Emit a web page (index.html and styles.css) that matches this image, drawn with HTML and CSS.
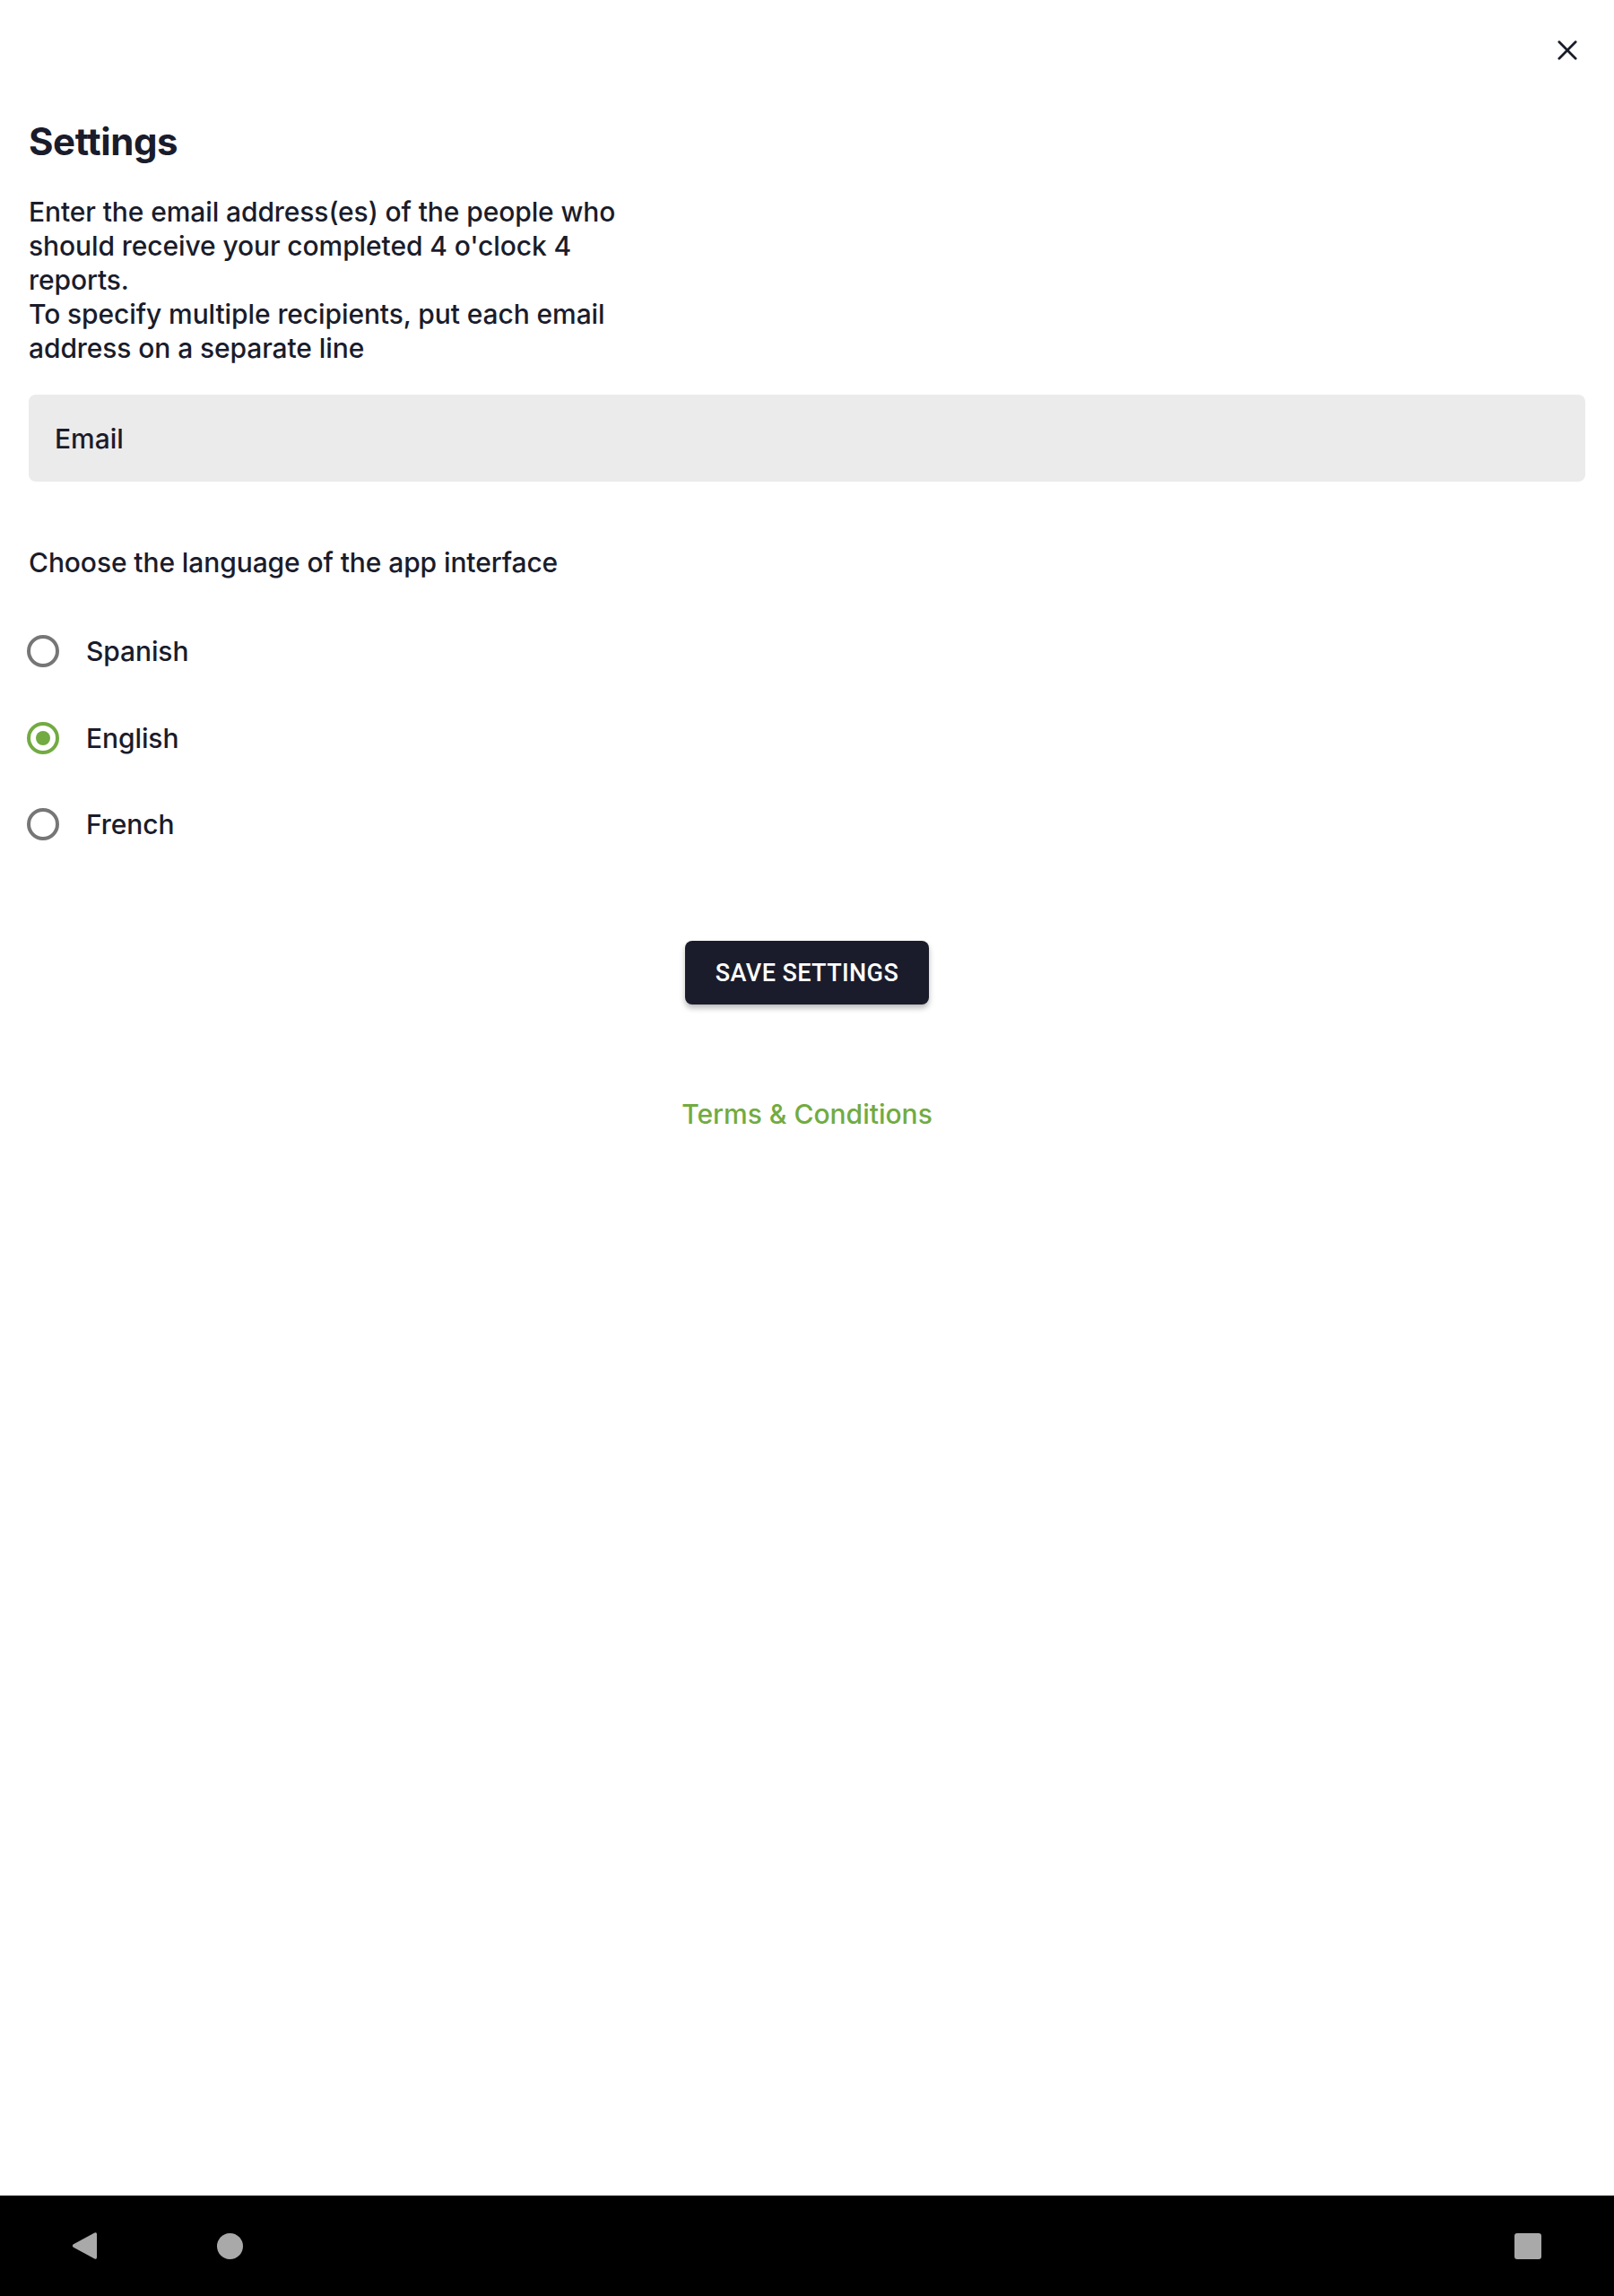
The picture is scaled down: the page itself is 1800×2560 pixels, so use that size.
FILE: index.html
```html
<!DOCTYPE html>
<html lang="en">
<head>
<meta charset="utf-8">
<title>Settings</title>
<link rel="stylesheet" href="styles.css">
</head>
<body>
<div class="screen">
  <main class="content">
    <header class="topbar">
      <button class="close" aria-label="Close">
        <svg viewBox="0 0 24 24" width="24" height="24"><path d="M2 2 L22 22 M22 2 L2 22" stroke="#1a1c2b" stroke-width="3" stroke-linecap="round" fill="none"/></svg>
      </button>
    </header>
    <h1 class="title">Settings</h1>
    <p class="intro">Enter the email address(es) of the people who should receive your completed 4 o'clock 4 reports.<br>To specify multiple recipients, put each email address on a separate line</p>
    <div class="field"><span class="field-label">Email</span></div>
    <p class="question">Choose the language of the app interface</p>
    <div class="radios">
      <div class="radio-row"><span class="radio"></span><span class="radio-label">Spanish</span></div>
      <div class="radio-row"><span class="radio checked"></span><span class="radio-label">English</span></div>
      <div class="radio-row"><span class="radio"></span><span class="radio-label">French</span></div>
    </div>
    <div class="actions">
      <button class="save">SAVE SETTINGS</button>
    </div>
    <div class="links"><a class="terms">Terms &amp; Conditions</a></div>
  </main>
  <nav class="navbar">
    <div class="nav-left">
      <svg class="nav-back" viewBox="0 0 28 32" width="28" height="32"><path d="M25.5 1.5 Q28 0.5 28 3 L28 29 Q28 31.5 25.5 30.5 L1.5 17.5 Q0 16 1.5 14.5 Z" fill="#a9a9a9"/></svg>
      <span class="nav-home"></span>
    </div>
    <span class="nav-recent"></span>
  </nav>
</div>
</body>
</html>
```

FILE: styles.css
```css
html, body {
  margin: 0;
  padding: 0;
  background: #ffffff;
}
body {
  font-family: Inter, "Noto Sans", sans-serif;
  color: #1a1c2b;
}
.screen {
  width: 1800px;
  height: 2560px;
  display: flex;
  flex-direction: column;
}
.content {
  flex: 1;
  padding: 0 32px;
  display: flex;
  flex-direction: column;
}
.topbar {
  height: 112px;
  display: flex;
  justify-content: flex-end;
  align-items: center;
}
.close {
  width: 48px;
  height: 48px;
  margin-right: -4px;
  border: 0;
  background: transparent;
  padding: 0;
  display: flex;
  align-items: center;
  justify-content: center;
}
.close svg {
  width: 22px;
  height: 22px;
}
.title {
  margin: 21px 0 0;
  font-size: 42px;
  line-height: 50px;
  font-weight: 700;
  letter-spacing: -0.4px;
}
.intro {
  margin: 34px 0 0;
  max-width: 700px;
  font-size: 30px;
  line-height: 38px;
  font-weight: 500;
  letter-spacing: -0.1px;
}
.field {
  margin-top: 33px;
  height: 97px;
  background: #ebebeb;
  border-radius: 8px;
  display: flex;
  align-items: center;
  padding-left: 29px;
}
.field-label {
  font-size: 30px;
  line-height: 38px;
  font-weight: 500;
}
.question {
  margin: 71px 0 0;
  font-size: 30px;
  line-height: 38px;
  font-weight: 500;
  letter-spacing: -0.1px;
}
.radios {
  margin-top: 32px;
  display: flex;
  flex-direction: column;
}
.radio-row {
  height: 96.5px;
  display: flex;
  align-items: center;
  gap: 30px;
}
.radio {
  box-sizing: border-box;
  width: 36px;
  height: 36px;
  margin-left: -2px;
  border-radius: 50%;
  border: 4px solid #767676;
  display: flex;
  align-items: center;
  justify-content: center;
}
.radio.checked {
  border-color: #72ab42;
}
.radio.checked::after {
  content: "";
  width: 16px;
  height: 16px;
  border-radius: 50%;
  background: #72ab42;
}
.radio-label {
  font-size: 30px;
  line-height: 38px;
  font-weight: 500;
  letter-spacing: -0.1px;
}
.actions {
  margin-top: 81px;
  display: flex;
  justify-content: center;
}
.save {
  width: 272px;
  height: 71px;
  border: 0;
  border-radius: 8px;
  background: #1a1c2b;
  color: #ffffff;
  font-family: Roboto, "Liberation Sans", sans-serif;
  font-size: 27px;
  font-weight: 500;
  letter-spacing: 0.4px;
  box-shadow: 0 4px 6px rgba(0, 0, 0, 0.28);
  padding: 2px 0 0;
}
.links {
  margin-top: 103px;
  display: flex;
  justify-content: center;
}
.terms {
  font-size: 30px;
  line-height: 38px;
  font-weight: 500;
  color: #72ab42;
  text-decoration: none;
}
.navbar {
  height: 112px;
  background: #000000;
  display: flex;
  align-items: center;
  justify-content: space-between;
  padding: 0 81px 0 80px;
}
.nav-left {
  display: flex;
  align-items: center;
  gap: 134px;
}
.nav-back {
  display: block;
}
.nav-home {
  width: 29px;
  height: 29px;
  border-radius: 50%;
  background: #a9a9a9;
}
.nav-recent {
  width: 30px;
  height: 29px;
  border-radius: 3px;
  background: #a9a9a9;
}
```
